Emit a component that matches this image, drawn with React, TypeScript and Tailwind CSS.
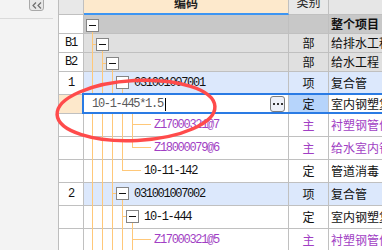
import React from 'react';

type Row = {
  num?: string;
  level: number;
  toggle?: boolean;
  cont: number[];
  code?: string;
  type?: string;
  name?: string;
  bg: string;
  purple?: boolean;
  bold?: boolean;
};

const rowsTop: Row[] = [
  { level: 0, toggle: true, cont: [], name: '整个项目', bg: 'bg-[#c8c8c8]', bold: true },
  { num: 'B1', level: 1, toggle: true, cont: [0], type: '部', name: '给排水工程', bg: 'bg-[#e0e0e0]' },
  { num: 'B2', level: 2, toggle: true, cont: [0, 1], type: '部', name: '给水工程', bg: 'bg-[#e0e0e0]' },
  { num: '1', level: 3, toggle: true, cont: [0, 1, 2], code: '031001007001', type: '项', name: '复合管', bg: 'bg-[#dce8fc]' },
];

const rowsBottom: Row[] = [
  { level: 5, cont: [0, 1, 2, 3, 4], code: 'Z17000321@7', type: '主', name: '衬塑钢管件', bg: 'bg-white', purple: true },
  { level: 5, cont: [0, 1, 2, 3], code: 'Z18000079@6', type: '主', name: '给水室内钢塑', bg: 'bg-white', purple: true },
  { level: 4, cont: [0, 1, 2], code: '10-11-142', type: '定', name: '管道消毒', bg: 'bg-white' },
  { num: '2', level: 3, toggle: true, cont: [0, 1, 2], code: '031001007002', type: '项', name: '复合管', bg: 'bg-[#dce8fc]' },
  { level: 4, toggle: true, cont: [0, 1, 2, 3], code: '10-1-444', type: '定', name: '室内钢塑复合', bg: 'bg-white' },
  { level: 5, cont: [0, 1, 2, 3, 4], code: 'Z17000321@5', type: '主', name: '衬塑钢管件', bg: 'bg-white', purple: true },
];

const mono = "font-['Liberation_Mono',monospace] text-[12px] tracking-[-1.3px]";
const cjk = "font-['Noto_Sans_CJK_SC',sans-serif] text-[12px]";

const TreeLines = ({ row }: { row: Row }) => {
  const L = row.level;
  const gx = (k: number) => 8.5 + 10 * k;
  const parent = L - 1;
  const last = parent >= 0 && !row.cont.includes(parent);
  return (
    <svg
      className="absolute left-0 top-0 pointer-events-none"
      width="204"
      height="23"
      stroke="#ffc879"
      strokeWidth="1"
      shapeRendering="crispEdges"
    >
      {row.cont.map((k) => (
        <line key={k} x1={gx(k)} y1={0} x2={gx(k)} y2={23} />
      ))}
      {last && <line x1={gx(parent)} y1={0} x2={gx(parent)} y2={10.5} />}
      {parent >= 0 && (
        <line x1={gx(parent)} y1={10.5} x2={row.toggle ? 2 + 10 * L : 17 + 10 * L} y2={10.5} />
      )}
      {row.toggle && <line x1={gx(L)} y1={16} x2={gx(L)} y2={23} />}
    </svg>
  );
};

const Toggle = () => (
  <div className="ml-[2px] mt-[4px] flex h-[13px] w-[13px] shrink-0 items-center justify-center border border-[#858585] bg-white">
    <div className="h-px w-[7px] bg-[#111]" />
  </div>
);

const TableRow = ({ row }: { row: Row }) => {
  const color = row.purple ? 'text-[#a13fc4]' : 'text-[#111]';
  return (
    <div className="flex h-[23px]">
      <div className={`flex w-[25px] shrink-0 items-center justify-center border-r border-b border-[#c0c0c0] bg-white text-[#111] ${mono}`}>
        {row.num}
      </div>
      <div className={`relative w-[205px] shrink-0 border-r border-b border-[#c0c0c0] ${row.bg}`}>
        <TreeLines row={row} />
        <div className="relative flex h-full items-start">
          {Array.from({ length: row.level }).map((_, i) => (
            <div key={i} className="w-[10px] shrink-0" />
          ))}
          {row.toggle ? <Toggle /> : <div className="w-[15px] shrink-0" />}
          {row.code && (
            <span className={`ml-[5px] whitespace-nowrap leading-[22px] ${mono} ${color}`}>{row.code}</span>
          )}
        </div>
      </div>
      <div className={`flex w-[40px] shrink-0 items-center justify-center border-r border-b border-[#c0c0c0] ${row.bg} ${cjk} ${color}`}>
        {row.type}
      </div>
      <div className={`flex flex-1 items-center overflow-hidden whitespace-nowrap border-b border-[#c0c0c0] pl-[2px] ${row.bg} ${cjk} ${color} ${row.bold ? 'font-bold' : ''}`}>
        {row.name}
      </div>
    </div>
  );
};

const EditRow = () => (
  <div className="flex h-[23px]">
    <div className="w-[25px] shrink-0 border-r border-b border-[#c0c0c0] bg-[#fde8cb]" />
    <div className="relative flex flex-1">
      <div className="flex w-[205px] shrink-0 items-center border-r border-b border-[#c0c0c0] bg-white">
        <span className={`ml-[8px] whitespace-nowrap text-[#5a5a5a] ${mono}`}>10-1-445*1.5</span>
        <div className="ml-[2px] h-[13px] w-px bg-black" />
        <div className="ml-auto mr-[3px] flex h-[16px] w-[15px] items-center justify-center gap-[2px] rounded-[3px] border border-[#7c7c7c] bg-[#eef0f7]">
          <div className="h-[2px] w-[2px] bg-[#333]" />
          <div className="h-[2px] w-[2px] bg-[#333]" />
          <div className="h-[2px] w-[2px] bg-[#333]" />
        </div>
      </div>
      <div className={`flex w-[40px] shrink-0 items-center justify-center border-r border-b border-[#c0c0c0] bg-[#b6d4fb] text-[#111] ${cjk}`}>
        定
      </div>
      <div className={`flex flex-1 items-center overflow-hidden whitespace-nowrap border-b border-[#c0c0c0] bg-white pl-[2px] text-[#111] ${cjk}`}>
        室内钢塑复合
      </div>
      <div className="pointer-events-none absolute -left-[2px] -top-[2px] right-0 bottom-0 border-2 border-r-0 border-[#2a7be4]" />
    </div>
  </div>
);

const App: React.FC = () => {
  return (
    <div className="relative flex h-[250px] w-[382px] overflow-hidden bg-white">
      <div className="w-[59px] shrink-0 border-r border-[#bdbdbd] bg-[#f3f3f3]">
        <div className="-mt-[3px] ml-[29px] flex h-[14px] w-[15px] items-center justify-center rounded-[3px] border border-[#a9a9a9] bg-[#e7e7e7] pt-[2px]">
          <svg width="10" height="7" viewBox="0 0 10 7" fill="none" stroke="#6e6e6e" strokeWidth="1.2">
            <polyline points="4,0.5 1,3.5 4,6.5" />
            <polyline points="9,0.5 6,3.5 9,6.5" />
          </svg>
        </div>
        <div className="mt-[7px] h-px w-[53px] bg-[#dadada]" />
      </div>

      <div className="flex flex-1 flex-col">
        <div className="flex h-[15px] shrink-0">
          <div className="w-[25px] shrink-0 border-r border-b border-[#c0c0c0] bg-[#e8e8e8]" />
          <div className="flex w-[205px] shrink-0 justify-center overflow-hidden border-r border-r-[#c0c0c0] border-b-2 border-b-[#3d95f2] bg-[#fde9cc]">
            <span className={`-mt-[3px] font-bold leading-[12px] text-[#222] ${cjk}`}>编码</span>
          </div>
          <div className="flex w-[40px] shrink-0 justify-center overflow-hidden border-r border-b border-[#c0c0c0] bg-[#e8e8e8]">
            <span className={`-mt-[4px] leading-[12px] text-[#222] ${cjk}`}>类别</span>
          </div>
          <div className="flex-1 border-b border-[#c0c0c0] bg-[#e6e6e6]" />
        </div>

        {rowsTop.map((r, i) => (
          <TableRow key={i} row={r} />
        ))}
        <EditRow />
        {rowsBottom.map((r, i) => (
          <TableRow key={i} row={r} />
        ))}
      </div>

      <svg className="pointer-events-none absolute left-0 top-0" width="382" height="250">
        <ellipse
          cx="136"
          cy="110.5"
          rx="79"
          ry="30"
          transform="rotate(-3 136 110.5)"
          fill="none"
          stroke="#ff4b4b"
          strokeWidth="3.5"
        />
      </svg>
    </div>
  );
};

export default App;
